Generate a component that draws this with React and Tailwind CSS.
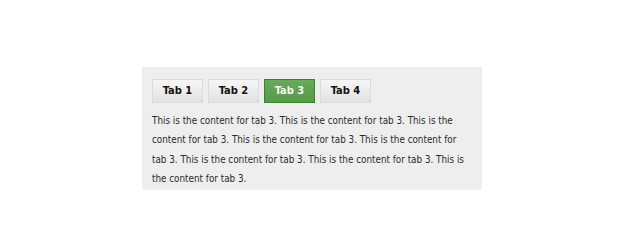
import React, { useState } from "react";

const tabs = ["Tab 1", "Tab 2", "Tab 3", "Tab 4"];

const App = () => {
  const [active, setActive] = useState(2);
  const n = active + 1;
  const text = Array(8)
    .fill(`This is the content for tab ${n}.`)
    .join(" ");

  return (
    <div
      className="w-[640px] h-[250px] bg-white pt-[67px] pl-[142px]"
      style={{ fontFamily: "Tahoma, 'DejaVu Sans Condensed', 'DejaVu Sans', sans-serif" }}
    >
      <div className="w-[340px] h-[123px] bg-[#eeeeee] pt-[12px] px-[10px]">
        <div className="flex gap-[5px]">
          {tabs.map((t, i) => (
            <button
              key={t}
              onClick={() => setActive(i)}
              className={
                i === active
                  ? "w-[51px] h-[24px] border border-[#2f8a2a] bg-gradient-to-b from-[#67aa57] to-[#559b47] text-[#f4f9f0] text-[11px] font-bold"
                  : "w-[51px] h-[24px] border border-[#dcdcdc] bg-gradient-to-b from-[#f6f6f6] to-[#e2e2e2] text-[#111] text-[11px] font-bold"
              }
            >
              {t}
            </button>
          ))}
        </div>
        <p className="mt-[8px] pr-[6px] text-[9.8px] leading-[19.4px] text-[#2a2a2a]">
          {text}
        </p>
      </div>
    </div>
  );
};

export default App;
